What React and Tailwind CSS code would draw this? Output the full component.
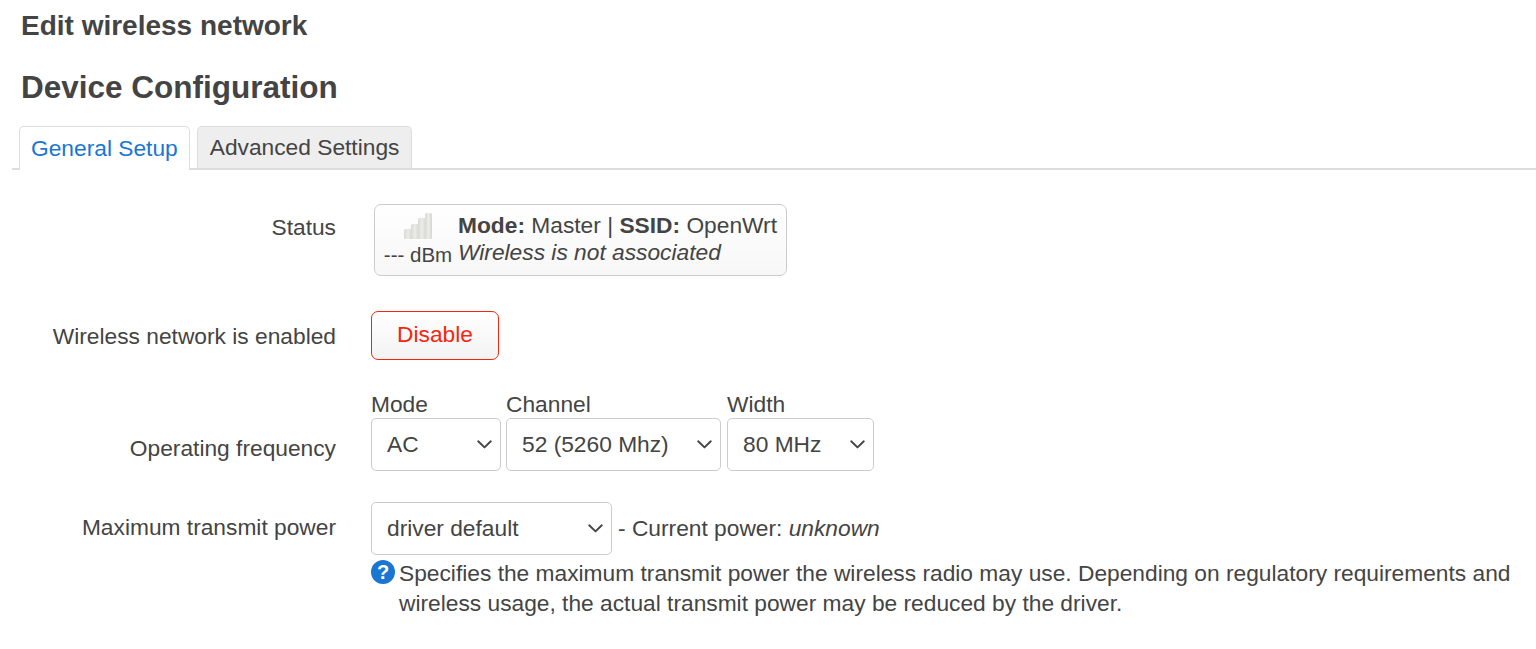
const Chevron = () => (
    <svg width="15" height="9" viewBox="0 0 15 9" fill="none" className="shrink-0">
        <path d="M1.2 1.3 L7.5 7.4 L13.8 1.3" stroke="#444" strokeWidth="1.9" strokeLinecap="round" strokeLinejoin="round" />
    </svg>
);

const Select = ({ value, className }) => (
    <div className={`h-[53px] flex items-center justify-between pl-[15px] pr-[8px] bg-white border border-[#ccc] rounded-[5px] whitespace-nowrap ${className}`}>
        <span>{value}</span>
        <Chevron />
    </div>
);

const SignalIcon = () => (
    <svg width="30" height="28" viewBox="0 0 30 28">
        <defs>
            <linearGradient id="bar" x1="0" y1="0" x2="1" y2="0">
                <stop offset="0" stopColor="#d9dad4" />
                <stop offset="0.5" stopColor="#ecece8" />
                <stop offset="1" stopColor="#d6d6d0" />
            </linearGradient>
        </defs>
        <rect x="1" y="17" width="8" height="10" rx="1.5" fill="url(#bar)" />
        <rect x="8" y="12" width="8" height="15" rx="1.5" fill="url(#bar)" />
        <rect x="15" y="6" width="8" height="21" rx="1.5" fill="url(#bar)" />
        <rect x="22" y="1" width="7" height="26" rx="1.5" fill="url(#bar)" />
    </svg>
);

const Row = ({ label, labelClass, children }) => (
    <div className="flex">
        <div className={`w-[336px] shrink-0 text-right ${labelClass}`}>{label}</div>
        <div className="ml-[35px] flex-1 min-w-0">{children}</div>
    </div>
);

export default function App() {
    return (
        <div className="min-h-[649px] bg-white text-[#444] text-[22.75px] leading-[33px] overflow-hidden" style={{ fontFamily: '"Liberation Sans", Arial, sans-serif' }}>
            <h2 className="pl-[21px] pt-[9px] text-[28px] leading-[33px] font-bold">Edit wireless network</h2>
            <h3 className="pl-[21px] mt-[25px] text-[31.5px] leading-[40px] font-bold">Device Configuration</h3>

            <div className="mt-[19px] ml-[12px] flex items-end gap-[7px] pl-[7px] border-b-2 border-[#ddd] h-[44px]">
                <div className="h-[44px] -mb-[2px] px-[11px] flex items-center bg-white border border-b-0 border-[#ddd] rounded-t-[5px] text-[#1976d2]">General Setup</div>
                <div className="h-[42px] px-[12px] flex items-center bg-[#eee] border border-b-0 border-[#ddd] rounded-t-[5px]">Advanced Settings</div>
            </div>

            <Row label="Status" labelClass="pt-[41px]">
                <div className="mt-[34px] ml-[3px] w-[413px] h-[72px] flex items-start pl-[9px] border border-[#ccc] rounded-[7px] bg-gradient-to-b from-white to-[#f7f7f7]">
                    <div className="w-[68px] shrink-0 flex flex-col items-center">
                        <div className="mt-[7px] h-[28px]"><SignalIcon /></div>
                        <div className="text-[20.5px] leading-[26px] mt-[2px] whitespace-nowrap">--- dBm</div>
                    </div>
                    <div className="ml-[6px] pt-[4px] whitespace-nowrap leading-[32px]">
                        <div><b>Mode:</b> Master | <b>SSID:</b> OpenWrt</div>
                        <div className="-mt-[5px] italic">Wireless is not associated</div>
                    </div>
                </div>
            </Row>

            <Row label="Wireless network is enabled" labelClass="pt-[44px]">
                <div className="mt-[35px] w-[128px] h-[49px] flex items-center justify-center border border-[#f6260e] rounded-[7px] text-[#f6260e] bg-gradient-to-b from-white to-[#f3f3f3] pb-[3px]">Disable</div>
            </Row>

            <Row label="Operating frequency" labelClass="pt-[72px]">
                <div className="mt-[30px] flex gap-[5px]">
                    <div>
                        <div className="leading-[28px]">Mode</div>
                        <Select value="AC" className="w-[130px]" />
                    </div>
                    <div>
                        <div className="leading-[28px]">Channel</div>
                        <Select value="52 (5260 Mhz)" className="w-[215px]" />
                    </div>
                    <div className="ml-[1px]">
                        <div className="leading-[28px]">Width</div>
                        <Select value="80 MHz" className="w-[147px]" />
                    </div>
                </div>
            </Row>

            <Row label="Maximum transmit power" labelClass="pt-[40px]">
                <div className="mt-[31px] flex items-center gap-[6px]">
                    <Select value="driver default" className="w-[241px]" />
                    <span>- Current power: <em>unknown</em></span>
                </div>
                <div className="mt-[3px] relative pl-[28px] pr-[20px] leading-[30px]">
                    <span className="absolute left-0 top-[2px] w-[24px] h-[24px] rounded-full bg-[#1976d2] text-white text-[20px] leading-[24px] font-bold text-center">?</span>
                    Specifies the maximum transmit power the wireless radio may use. Depending on regulatory requirements and wireless usage, the actual transmit power may be reduced by the driver.
                </div>
            </Row>
        </div>
    );
}
